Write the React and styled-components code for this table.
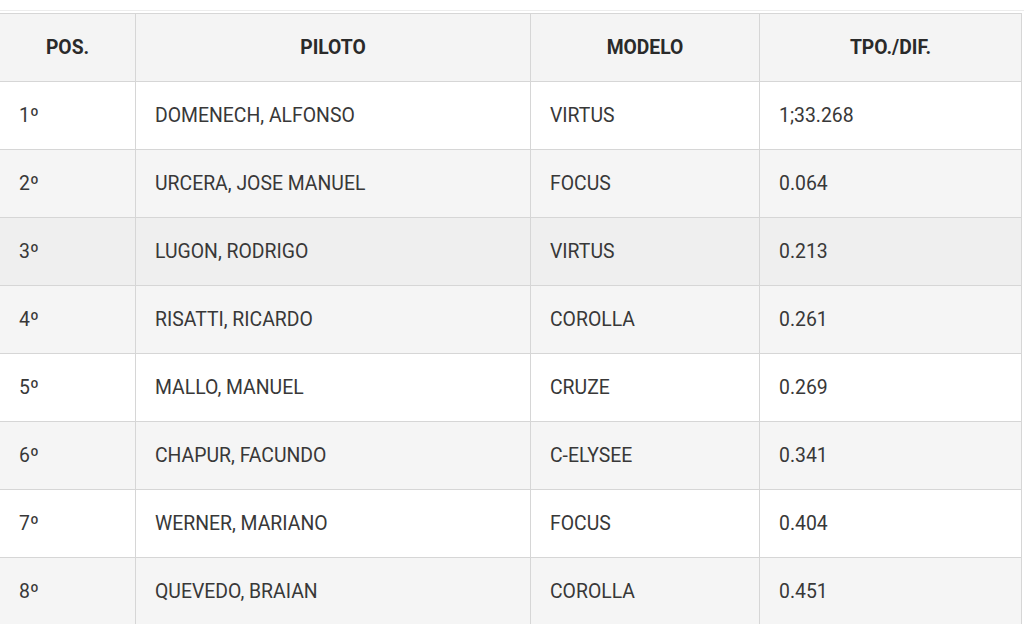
import React from "react";
import styled, { createGlobalStyle } from "styled-components";

const Global = createGlobalStyle`
  html, body { margin: 0; padding: 0; background: #fff; overflow: hidden; }
  body { font-family: Roboto, "Liberation Sans", Arial, sans-serif; }
`;

const Page = styled.div`
  padding-top: 10px;
  width: 1024px;
  overflow: hidden;
`;

const TopRule = styled.div`
  height: 1px;
  background: #ececec;
  margin-bottom: 2px;
`;

const Table = styled.table`
  border-collapse: collapse;
  margin-left: -1px;
  width: 1022px;
  table-layout: fixed;
  font-family: Roboto, "Liberation Sans", Arial, sans-serif;
`;

const Th = styled.th`
  height: 67px;
  padding: 0 20px;
  border: 1px solid #d6d6d6;
  background: #f4f4f4;
  color: #2a2a2a;
  font-size: 19.3px;
  font-weight: 700;
  text-align: center;
  vertical-align: middle;
`;

const toneBg = { white: "#ffffff", gray: "#f5f5f5", dark: "#efefef" };

const Row = styled.tr`
  background: ${(p) => toneBg[p.$tone]};
`;

const Td = styled.td`
  height: 67px;
  padding: 0 19px;
  border: 1px solid #d6d6d6;
  color: #383838;
  font-size: 19.4px;
  font-weight: 400;
  text-align: left;
  vertical-align: middle;
  white-space: nowrap;
`;

const rows = [
  ["1º", "DOMENECH, ALFONSO", "VIRTUS", "1;33.268", "white"],
  ["2º", "URCERA, JOSE MANUEL", "FOCUS", "0.064", "gray"],
  ["3º", "LUGON, RODRIGO", "VIRTUS", "0.213", "dark"],
  ["4º", "RISATTI, RICARDO", "COROLLA", "0.261", "gray"],
  ["5º", "MALLO, MANUEL", "CRUZE", "0.269", "white"],
  ["6º", "CHAPUR, FACUNDO", "C-ELYSEE", "0.341", "gray"],
  ["7º", "WERNER, MARIANO", "FOCUS", "0.404", "white"],
  ["8º", "QUEVEDO, BRAIAN", "COROLLA", "0.451", "gray"],
];

export default function App() {
  return (
    <Page>
      <Global />
      <TopRule />
      <Table>
        <colgroup>
          <col style={{ width: "136px" }} />
          <col style={{ width: "395px" }} />
          <col style={{ width: "229px" }} />
          <col style={{ width: "262px" }} />
        </colgroup>
        <thead>
          <tr>
            <Th>POS.</Th>
            <Th>PILOTO</Th>
            <Th>MODELO</Th>
            <Th>TPO./DIF.</Th>
          </tr>
        </thead>
        <tbody>
          {rows.map(([pos, name, model, time, tone]) => (
            <Row key={pos} $tone={tone}>
              <Td>{pos}</Td>
              <Td>{name}</Td>
              <Td>{model}</Td>
              <Td>{time}</Td>
            </Row>
          ))}
        </tbody>
      </Table>
    </Page>
  );
}
